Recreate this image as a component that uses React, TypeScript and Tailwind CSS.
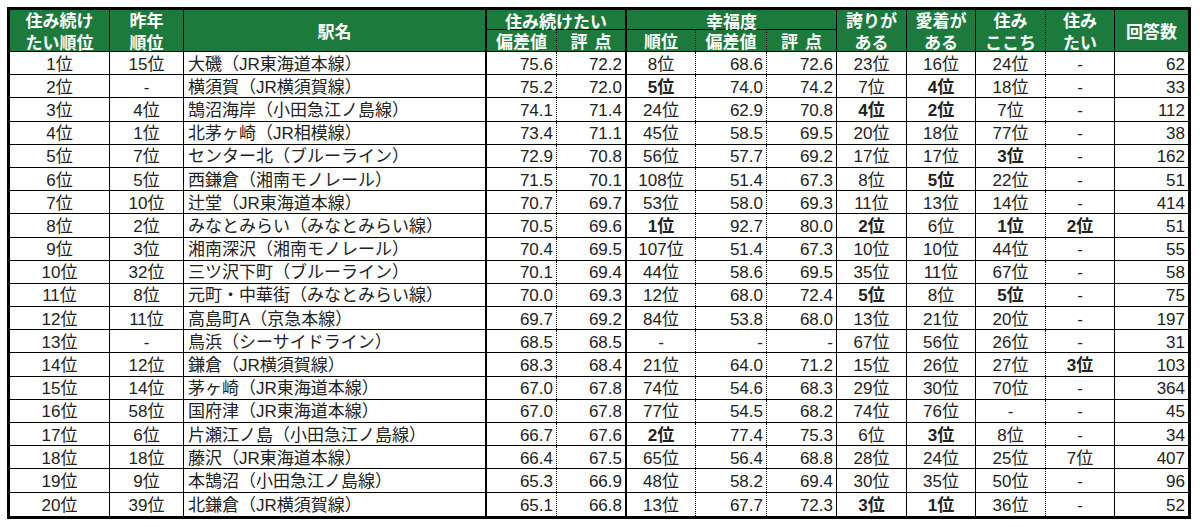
import React from "react";

type Row = string[];

const rows: Row[] = [
  ["1位", "15位", "大磯（JR東海道本線）", "75.6", "72.2", "8位", "68.6", "72.6", "23位", "16位", "24位", "-", "62"],
  ["2位", "-", "横須賀（JR横須賀線）", "75.2", "72.0", "*5位", "74.0", "74.2", "7位", "*4位", "18位", "-", "33"],
  ["3位", "4位", "鵠沼海岸（小田急江ノ島線）", "74.1", "71.4", "24位", "62.9", "70.8", "*4位", "*2位", "7位", "-", "112"],
  ["4位", "1位", "北茅ヶ崎（JR相模線）", "73.4", "71.1", "45位", "58.5", "69.5", "20位", "18位", "77位", "-", "38"],
  ["5位", "7位", "センター北（ブルーライン）", "72.9", "70.8", "56位", "57.7", "69.2", "17位", "17位", "*3位", "-", "162"],
  ["6位", "5位", "西鎌倉（湘南モノレール）", "71.5", "70.1", "108位", "51.4", "67.3", "8位", "*5位", "22位", "-", "51"],
  ["7位", "10位", "辻堂（JR東海道本線）", "70.7", "69.7", "53位", "58.0", "69.3", "11位", "13位", "14位", "-", "414"],
  ["8位", "2位", "みなとみらい（みなとみらい線）", "70.5", "69.6", "*1位", "92.7", "80.0", "*2位", "6位", "*1位", "*2位", "51"],
  ["9位", "3位", "湘南深沢（湘南モノレール）", "70.4", "69.5", "107位", "51.4", "67.3", "10位", "10位", "44位", "-", "55"],
  ["10位", "32位", "三ツ沢下町（ブルーライン）", "70.1", "69.4", "44位", "58.6", "69.5", "35位", "11位", "67位", "-", "58"],
  ["11位", "8位", "元町・中華街（みなとみらい線）", "70.0", "69.3", "12位", "68.0", "72.4", "*5位", "8位", "*5位", "-", "75"],
  ["12位", "11位", "高島町A（京急本線）", "69.7", "69.2", "84位", "53.8", "68.0", "13位", "21位", "20位", "-", "197"],
  ["13位", "-", "鳥浜（シーサイドライン）", "68.5", "68.5", "-", "-", "-", "67位", "56位", "26位", "-", "31"],
  ["14位", "12位", "鎌倉（JR横須賀線）", "68.3", "68.4", "21位", "64.0", "71.2", "15位", "26位", "27位", "*3位", "103"],
  ["15位", "14位", "茅ヶ崎（JR東海道本線）", "67.0", "67.8", "74位", "54.6", "68.3", "29位", "30位", "70位", "-", "364"],
  ["16位", "58位", "国府津（JR東海道本線）", "67.0", "67.8", "77位", "54.5", "68.2", "74位", "76位", "-", "-", "45"],
  ["17位", "6位", "片瀬江ノ島（小田急江ノ島線）", "66.7", "67.6", "*2位", "77.4", "75.3", "6位", "*3位", "8位", "-", "34"],
  ["18位", "18位", "藤沢（JR東海道本線）", "66.4", "67.5", "65位", "56.4", "68.8", "28位", "24位", "25位", "7位", "407"],
  ["19位", "9位", "本鵠沼（小田急江ノ島線）", "65.3", "66.9", "48位", "58.2", "69.4", "30位", "35位", "50位", "-", "96"],
  ["20位", "39位", "北鎌倉（JR横須賀線）", "65.1", "66.8", "13位", "67.7", "72.3", "*3位", "*1位", "36位", "-", "52"],
];

const GRID =
  "grid grid-cols-[100px_74px_303px_70px_70px_69px_71px_70px_70px_69px_70px_69px_73px]";

// per column: alignment + right border
const cellCls: string[] = [
  "justify-center border-r border-black",
  "justify-center border-r border-black",
  "justify-start pl-[4px] border-r-2 border-black",
  "justify-end pr-[3px] border-r border-black [border-right-style:dotted]",
  "justify-end pr-[3px] border-r-2 border-black",
  "justify-center border-r border-black [border-right-style:dotted]",
  "justify-end pr-[3px] border-r border-black [border-right-style:dotted]",
  "justify-end pr-[3px] border-r border-black",
  "justify-center border-r border-black",
  "justify-center border-r border-black",
  "justify-center border-r border-black [border-right-style:dotted]",
  "justify-center border-r border-black",
  "justify-end pr-[3px]",
];

function Cell({ v, i }: { v: string; i: number }) {
  const bold = v.startsWith("*");
  const text = bold ? v.slice(1) : v;
  return (
    <div
      className={`flex items-center pt-[2px] whitespace-nowrap ${cellCls[i]} ${
        bold ? "font-bold" : ""
      }`}
    >
      {text}
    </div>
  );
}

const H =
  "flex items-center justify-center text-center text-white font-bold leading-[22px] border-black";
const HS =
  "flex items-center justify-center text-center text-white font-bold leading-[20px] border-black";

export default function App() {
  return (
    <div className="w-[1200px] h-[527px] bg-white overflow-hidden">
      <div className="ml-[7px] mt-[7px] w-[1184px] border-[3px] border-black font-['Liberation_Sans','Noto_Sans_CJK_JP',sans-serif] text-[17px] text-[#222]">
        {/* header */}
        <div
          className={`${GRID} grid-rows-[20px_21px] h-[42px] bg-[#1c7a3c] border-b border-black font-['Noto_Sans_CJK_JP',sans-serif] text-[17px]`}
        >
          <div className={`${H} col-start-1 row-start-1 row-span-2 border-r`}>
            住み続け
            <br />
            たい順位
          </div>
          <div className={`${H} col-start-2 row-start-1 row-span-2 border-r`}>
            昨年
            <br />
            順位
          </div>
          <div className={`${H} col-start-3 row-start-1 row-span-2 border-r-2`}>駅名</div>
          <div className={`${HS} col-start-4 col-span-2 row-start-1 border-r-2 border-b pt-[2px]`}>
            住み続けたい
          </div>
          <div className={`${HS} col-start-6 col-span-3 row-start-1 border-r border-b pt-[2px]`}>
            幸福度
          </div>
          <div className={`${H} col-start-9 row-start-1 row-span-2 border-r`}>
            誇りが
            <br />
            ある
          </div>
          <div className={`${H} col-start-10 row-start-1 row-span-2 border-r`}>
            愛着が
            <br />
            ある
          </div>
          <div
            className={`${H} col-start-11 row-start-1 row-span-2 border-r border-[#d8e8dc] [border-right-style:dotted]`}
          >
            住み
            <br />
            ここち
          </div>
          <div className={`${H} col-start-12 row-start-1 row-span-2 border-r`}>
            住み
            <br />
            たい
          </div>
          <div className={`${H} col-start-13 row-start-1 row-span-2`}>回答数</div>

          <div
            className={`${HS} col-start-4 row-start-2 border-r border-[#d8e8dc] [border-right-style:dotted]`}
          >
            偏差値
          </div>
          <div className={`${HS} col-start-5 row-start-2 border-r-2 tracking-[7px] pl-[7px]`}>
            評点
          </div>
          <div
            className={`${HS} col-start-6 row-start-2 border-r border-[#d8e8dc] [border-right-style:dotted]`}
          >
            順位
          </div>
          <div
            className={`${HS} col-start-7 row-start-2 border-r border-[#d8e8dc] [border-right-style:dotted]`}
          >
            偏差値
          </div>
          <div className={`${HS} col-start-8 row-start-2 border-r tracking-[7px] pl-[7px]`}>
            評点
          </div>
        </div>

        {/* body */}
        {rows.map((r, ri) => (
          <div
            key={ri}
            className={`${GRID} h-[23.2px] leading-none ${
              ri < rows.length - 1 ? "border-b border-black" : ""
            }`}
          >
            {r.map((v, i) => (
              <Cell key={i} v={v} i={i} />
            ))}
          </div>
        ))}
      </div>
    </div>
  );
}
